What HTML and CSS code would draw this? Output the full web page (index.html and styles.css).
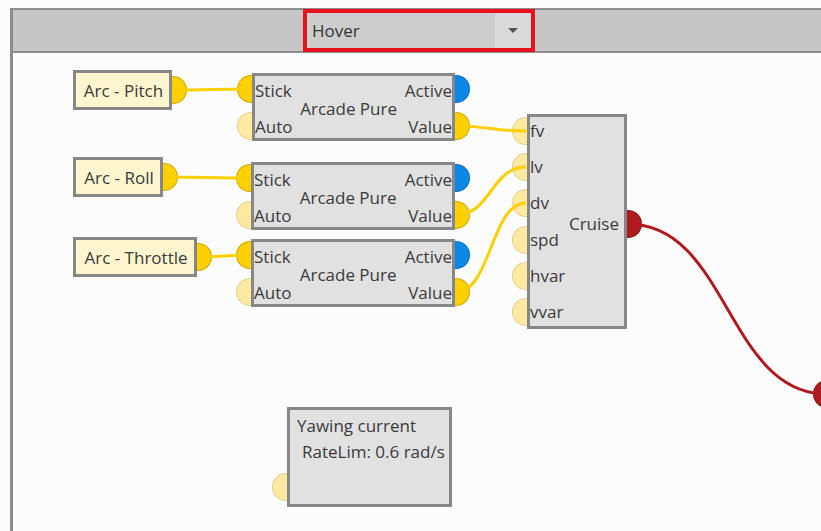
FILE: index.html
```html
<!DOCTYPE html>
<html>
<head>
    <meta charset="UTF-8">
    <title>Edytor węzłów</title>
    <link rel="stylesheet" href="styles.css">
</head>
<body>
    <div class="editor">
        <div class="toolbar">
            <div class="mode-select">
                <span class="mode-value">Hover</span>
                <span class="mode-arrow"></span>
            </div>
        </div>
        <div class="canvas">
            <svg class="wires" width="808" height="478" viewBox="0 0 808 478">
                <path class="wire" d="M160 37 C 199 37 199 36 238 36"/>
                <path class="wire" d="M151 124 C 194 124 194 125 237 125"/>
                <path class="wire" d="M185 204 C 211 204 211 202 237 202"/>
                <path class="wire" d="M443 73 C 478 73 478 78 513 78"/>
                <path class="wire" d="M443 162 C 478 162 478 114 513 114"/>
                <path class="wire" d="M443 239 C 478 239 478 150 513 150"/>
                <path class="wire wire-red" d="M615 171 C 715 171 714 341 814 341"/>
            </svg>

            <div class="node source" style="left:60px; top:17px; width:99px;">
                Arc - Pitch
                <span class="port out on"></span>
            </div>
            <div class="node source" style="left:60px; top:104px; width:90px;">
                Arc - Roll
                <span class="port out on"></span>
            </div>
            <div class="node source" style="left:60px; top:184px; width:124px;">
                Arc - Throttle
                <span class="port out on"></span>
            </div>

            <div class="node pure" style="left:239px; top:20px; width:203px;">
                <span class="lbl">Stick</span>
                <span class="title">Arcade Pure</span>
                <span class="lbl right">Active</span>
                <span class="lbl">Auto</span>
                <span class="lbl right">Value</span>
                <span class="port in on row1"></span>
                <span class="port in off row2"></span>
                <span class="port out blue row1"></span>
                <span class="port out on row2"></span>
            </div>
            <div class="node pure" style="left:238px; top:109px; width:204px;">
                <span class="lbl">Stick</span>
                <span class="title">Arcade Pure</span>
                <span class="lbl right">Active</span>
                <span class="lbl">Auto</span>
                <span class="lbl right">Value</span>
                <span class="port in on row1"></span>
                <span class="port in off row2"></span>
                <span class="port out blue row1"></span>
                <span class="port out on row2"></span>
            </div>
            <div class="node pure" style="left:238px; top:186px; width:204px;">
                <span class="lbl">Stick</span>
                <span class="title">Arcade Pure</span>
                <span class="lbl right">Active</span>
                <span class="lbl">Auto</span>
                <span class="lbl right">Value</span>
                <span class="port in on row1"></span>
                <span class="port in off row2"></span>
                <span class="port out blue row1"></span>
                <span class="port out on row2"></span>
            </div>

            <div class="node cruise" style="left:514px; top:61px;">
                <div class="inputs">
                    <span class="in-row">fv<span class="port in off"></span></span>
                    <span class="in-row">lv<span class="port in off"></span></span>
                    <span class="in-row">dv<span class="port in off"></span></span>
                    <span class="in-row">spd<span class="port in off"></span></span>
                    <span class="in-row">hvar<span class="port in off"></span></span>
                    <span class="in-row">vvar<span class="port in off"></span></span>
                </div>
                <span class="title">Cruise</span>
                <span class="port out red cruise-out"></span>
            </div>

            <div class="node info" style="left:274px; top:354px;">
                <div>Yawing current</div>
                <div class="sub">RateLim: 0.6 rad/s</div>
                <span class="port in off yaw-in"></span>
            </div>

            <span class="port red lone" style="left:800px; top:327px;"></span>
        </div>
    </div>
</body>
</html>
```

FILE: styles.css
```css
/* Edytor węzłów */
body {
    margin: 0;
    background-color: #fcfcfc;
    font-family: "Open Sans", "Noto Sans", sans-serif;
    color: #3a3a3a;
    overflow: hidden;
}

.editor {
    margin: 8px 0 0 10px;
    height: 523px;
    border-left: 3px solid #8c8c8c;
    border-top: 2px solid #8f8f8f;
    display: flex;
    flex-direction: column;
}

.toolbar {
    height: 41px;
    flex: none;
    background-color: #c6c6c6;
    border-bottom: 2px solid #8f8f8f;
    display: flex;
    align-items: center;
    justify-content: center;
    padding-left: 4px;
}

/* lista wyboru trybu */
.mode-select {
    flex: none;
    width: 224px;
    height: 35px;
    border: 4px solid #e8111f;
    background-color: #cdcdcd;
    display: flex;
}

.mode-value {
    flex: 1;
    padding-left: 5px;
    font-size: 17px;
    line-height: 35px;
    color: #333;
}

.mode-arrow {
    width: 36px;
    background-color: #dadada;
    display: flex;
    align-items: center;
    justify-content: center;
}

.mode-arrow::before {
    content: "";
    border-left: 5px solid transparent;
    border-right: 5px solid transparent;
    border-top: 5px solid #555;
}

/* płótno */
.canvas {
    flex: 1;
    position: relative;
    z-index: 0;
    overflow: hidden;
    background-color: #fcfcfc;
}

.wires {
    position: absolute;
    left: 0;
    top: 0;
}

.wire {
    fill: none;
    stroke: #fccf00;
    stroke-width: 3;
}

.wire-red {
    stroke: #b0191e;
}

/* węzły */
.node {
    position: absolute;
    box-sizing: border-box;
    border: 3px solid #878787;
    background-color: #e1e1e1;
    font-size: 17px;
}

.source {
    height: 40px;
    background-color: #fff6cf;
    display: flex;
    align-items: center;
    justify-content: center;
    padding-left: 2px;
    white-space: nowrap;
}

.source .port {
    top: 3px;
}

.pure {
    height: 68px;
    display: grid;
    grid-template-columns: auto 1fr auto;
    grid-template-rows: 28px 28px;
    row-gap: 8px;
    align-items: center;
}

.pure .title {
    grid-column: 2;
    grid-row: 1 / 3;
    text-align: center;
}

.lbl.right {
    text-align: right;
}

.cruise {
    width: 100px;
    height: 215px;
    display: flex;
    align-items: center;
}

.inputs {
    align-self: flex-start;
    display: flex;
    flex-direction: column;
    gap: 8.2px;
}

.in-row {
    position: relative;
    height: 28px;
    line-height: 28px;
}

.cruise .title {
    margin-left: auto;
    padding-right: 5px;
    padding-top: 4px;
}

.info {
    width: 165px;
    height: 100px;
    padding: 3px 0 0 7px;
    line-height: 26px;
}

.info .sub {
    padding-left: 5px;
}

/* porty */
.port {
    position: absolute;
    width: 28px;
    height: 28px;
    box-sizing: border-box;
    border-radius: 50%;
    border: 1px solid rgba(0, 0, 0, 0.18);
    z-index: -1;
}

.port.in { left: -18px; }
.port.out { right: -18px; }
.port.row1 { top: -1px; }
.port.row2 { top: 36px; }
.in-row .port { top: 0; }
.cruise-out { top: 93px; }
.yaw-in { top: 63px; }

.port.on { background-color: #fdd000; }
.port.off { background-color: #fde9a0; border-color: rgba(0, 0, 0, 0.1); }
.port.blue { background-color: #0b88e6; }
.port.red { background-color: #b11b20; }
```
